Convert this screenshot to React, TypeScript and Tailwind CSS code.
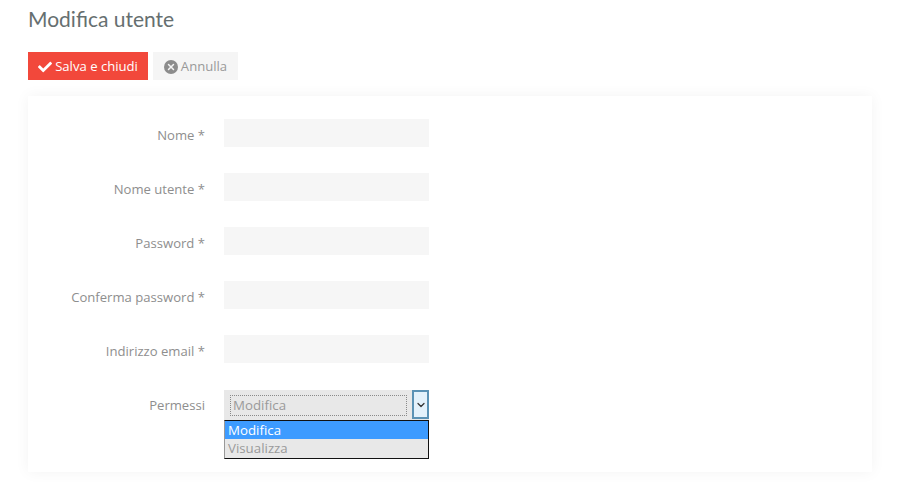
import { ChevronDown, X } from 'lucide-react';
import { FaCheck } from 'react-icons/fa';

const fields = ['Nome *', 'Nome utente *', 'Password *', 'Conferma password *', 'Indirizzo email *'];

export default function App() {
  return (
    <div className="w-[900px] h-[483px] overflow-hidden bg-white pl-7 pr-7 font-['Open_Sans',sans-serif]">
      {/* Header */}
      <h1 className="pt-[5px] h-[52px] text-[21px] leading-[28px] text-[#666f70] font-['Lato',sans-serif]">Modifica utente</h1>

      {/* Actions */}
      <div className="flex gap-[5px] h-[28px]">
        <button className="w-[120px] pt-[1px] bg-[#f2483b] text-white text-[13.1px] flex items-center justify-center gap-[3px]">
          <FaCheck className="h-[14px] w-[14px]" />
          Salva e chiudi
        </button>
        <button className="w-[85px] pt-[1px] bg-[#f5f5f5] text-[#999] text-[13.1px] flex items-center justify-center gap-[3px]">
          <span className="h-[14px] w-[14px] rounded-full bg-[#8c8c8c] flex items-center justify-center">
            <X className="h-[10px] w-[10px] text-[#f5f5f5]" strokeWidth={3.5} />
          </span>
          Annulla
        </button>
      </div>

      {/* Form */}
      <div className="mt-4 h-[376px] pt-[23px] shadow-[0_0_14px_rgba(0,0,0,0.05)]">
        <div className="flex flex-col gap-[26px]">
          {fields.map(label => (
            <div key={label} className="flex items-center h-[28px]">
              <label className="w-[177px] pt-[5px] text-right text-[13.1px] text-[#8e8e8e]">{label}</label>
              <div className="ml-[19px] w-[205px] h-[28px] bg-[#f6f6f6]" />
            </div>
          ))}
          <div className="flex items-center h-[30px] mt-[1px]">
            <label className="w-[177px] pt-[1px] text-right text-[13.1px] text-[#8e8e8e]">Permessi</label>
            <div className="relative ml-[19px] w-[205px] h-[30px] bg-[#e8e8e8] flex items-center">
              <div className="ml-[6px] w-[177px] h-[21px] border border-dotted border-[#8a8a8a] pl-[2px] text-[13.3px] leading-[18px] text-[#9a9a9a]">Modifica</div>
              <div className="absolute right-0 top-0 w-[17px] h-[29px] bg-[#e3f1fb] border-2 border-[#5b92b5] flex items-center justify-center">
                <ChevronDown className="h-[12px] w-[12px] text-[#333]" strokeWidth={2.5} />
              </div>
              {/* Open list */}
              <div className="absolute left-0 top-[30px] w-[205px] h-[39px] bg-[#e8e8e8] border border-[#111] border-l-[#999] text-[13.3px] leading-[18px]">
                <div className="h-[18px] pl-[3px] bg-[#3d9bff] text-white">Modifica</div>
                <div className="h-[18px] pl-[3px] text-[#9a9a9a]">Visualizza</div>
              </div>
            </div>
          </div>
        </div>
      </div>
    </div>
  );
}
